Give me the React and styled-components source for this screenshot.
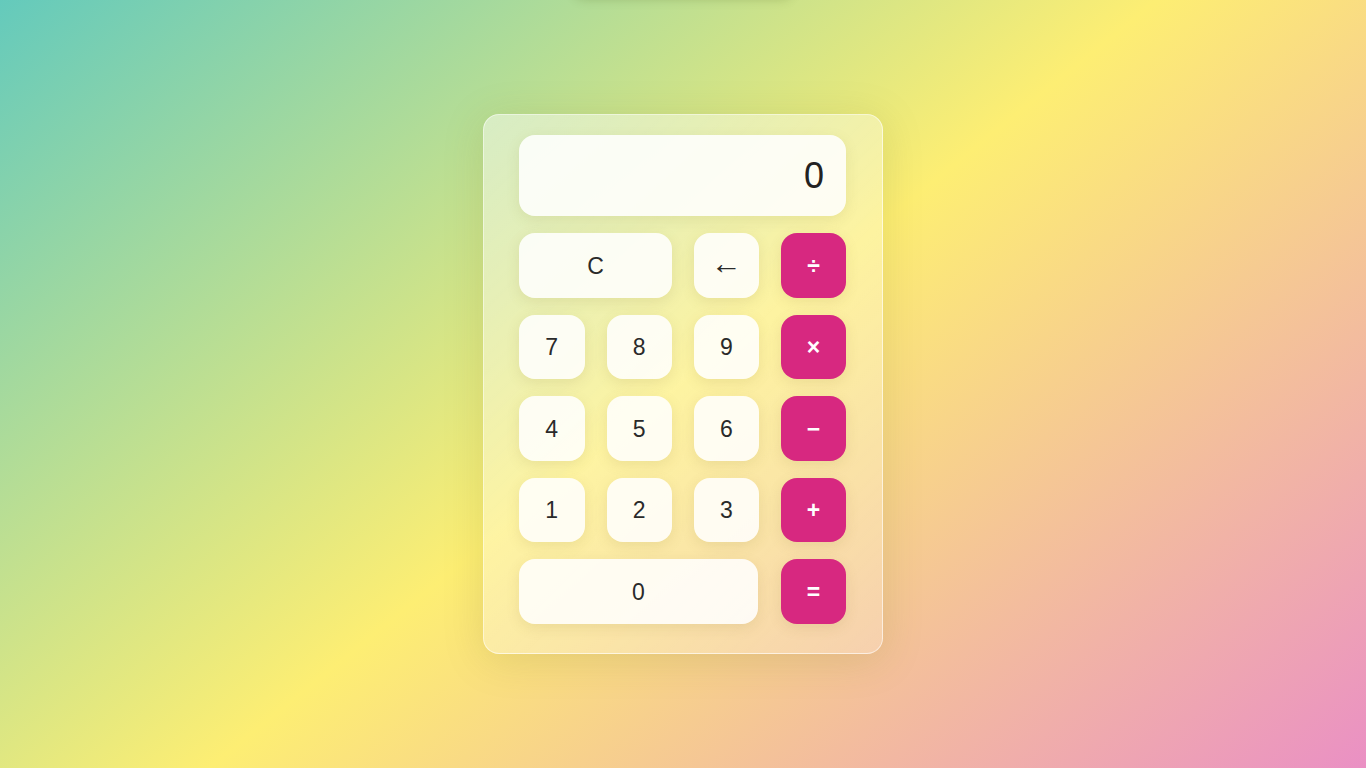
import styled, { createGlobalStyle } from "styled-components";

const GlobalStyle = createGlobalStyle`
  html, body {
    margin: 0;
    padding: 0;
    height: 100%;
  }
  body {
    font-family: "Liberation Sans", Arial, sans-serif;
    background: linear-gradient(141deg, #64cabc 0%, #fdee73 50%, #ea90c4 100%);
    overflow: hidden;
  }
  #root {
    height: 100%;
  }
`;

const Page = styled.main`
  position: relative;
  height: 100vh;
  display: flex;
  justify-content: center;
  padding-top: 114px;
  box-sizing: border-box;
`;

const TopShade = styled.div`
  position: absolute;
  top: -40px;
  left: 50%;
  transform: translateX(-50%);
  width: 220px;
  height: 38px;
  border-radius: 12px;
  box-shadow: 0 2px 10px rgba(90, 110, 40, 0.25);
`;

const Card = styled.div`
  width: 400px;
  height: 540px;
  box-sizing: border-box;
  padding: 20px 36px 0 35px;
  border-radius: 16px;
  border: 1px solid rgba(255, 255, 255, 0.55);
  background: linear-gradient(135deg, rgba(255, 255, 255, 0.45), rgba(255, 255, 255, 0.22));
  box-shadow: 0 6px 40px rgba(120, 120, 40, 0.18);
  display: flex;
  flex-direction: column;
  gap: 17px;
`;

const Display = styled.div`
  height: 81px;
  box-sizing: border-box;
  border-radius: 16px;
  background: rgba(255, 255, 255, 0.86);
  box-shadow: 0 4px 14px rgba(120, 120, 40, 0.12);
  display: flex;
  align-items: center;
  justify-content: flex-end;
  padding: 1px 22px 0;
  font-size: 36px;
  color: #222;
`;

const Keys = styled.div`
  display: grid;
  grid-template-columns: repeat(4, 1fr);
  grid-auto-rows: 64.5px;
  column-gap: 22px;
  row-gap: 17px;
`;

const Key = styled.button`
  grid-column: span ${({ $span }) => $span || 1};
  box-sizing: border-box;
  border: none;
  border-radius: 16px;
  font-family: "Liberation Sans", Arial, sans-serif;
  font-size: ${({ $size }) => $size || 23}px;
  font-weight: ${({ $op }) => ($op ? 700 : 400)};
  color: ${({ $op }) => ($op ? "#ffffff" : "#2a2a2a")};
  background: ${({ $op }) => ($op ? "#d72880" : "rgba(255, 255, 255, 0.86)")};
  box-shadow: 0 4px 14px rgba(120, 110, 40, 0.12);
  display: flex;
  align-items: center;
  justify-content: center;
  padding: 2px 0 ${({ $lift }) => $lift || 0}px;
  cursor: pointer;
  width: ${({ $width }) => ($width ? `${$width}px` : "auto")};
`;

const rows = [
  [
    { label: "C", span: 2, width: 153 },
    { label: "←", size: 31, lift: 5 },
    { label: "÷", op: true },
  ],
  [{ label: "7" }, { label: "8" }, { label: "9" }, { label: "×", op: true }],
  [{ label: "4" }, { label: "5" }, { label: "6" }, { label: "−", op: true }],
  [{ label: "1" }, { label: "2" }, { label: "3" }, { label: "+", op: true }],
  [{ label: "0", span: 3, width: 239 }, { label: "=", op: true }],
];

const App = () => {
  return (
    <>
      <GlobalStyle />
      <Page>
        <TopShade />
        <Card>
          <Display>0</Display>
          <Keys>
            {rows.flat().map((k, i) => (
              <Key key={i} $span={k.span} $op={k.op} $size={k.size} $width={k.width} $lift={k.lift}>
                {k.label}
              </Key>
            ))}
          </Keys>
        </Card>
      </Page>
    </>
  );
};

export default App;
